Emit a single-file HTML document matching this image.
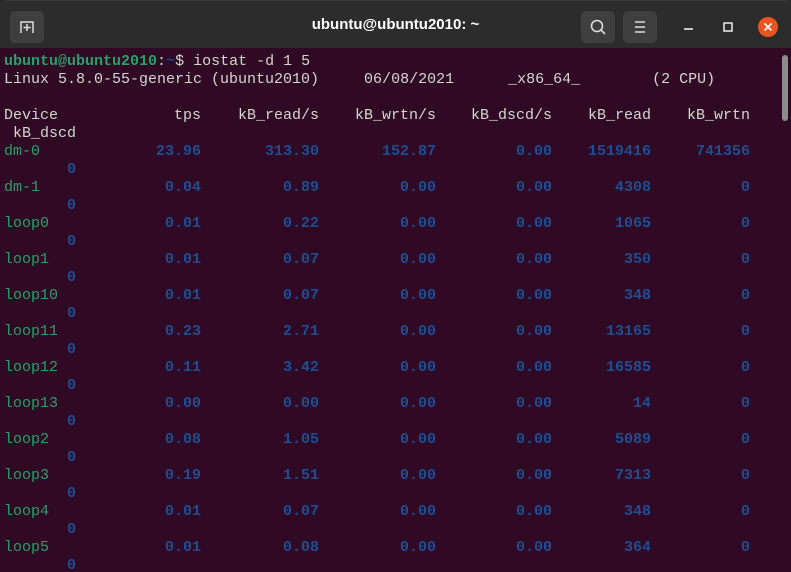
<!DOCTYPE html>
<html><head><meta charset="utf-8"><style>
*{margin:0;padding:0;box-sizing:border-box}
body{width:791px;height:572px;overflow:hidden;background:#2a2a2a;font-family:"Liberation Mono",monospace}
#tb{position:absolute;left:0;top:0;width:791px;height:48px;background:#2c2c2c;border-radius:8px 8px 0 0;border-top:1px solid #3a3a3a}
.btn{position:absolute;top:10px;width:34px;height:32px;background:#3f3f3f;border-radius:5px}
#title{position:absolute;left:0;width:791px;top:15px;text-align:center;color:#fff;font:bold 15px "Liberation Sans",sans-serif}
#term{position:absolute;left:0;top:48px;width:791px;height:524px;background:#300a24;overflow:hidden}
#in{position:absolute;left:0;top:2px;width:791px;height:524px}
.l{position:absolute;left:4px;height:18px;line-height:18px;font-size:15px;white-space:pre;color:#d3d7cf}
.row{position:absolute;left:0;width:791px;height:18px;line-height:18px;font-size:15px;white-space:pre}
.row span{position:absolute;width:140px;text-align:right;color:#1d4e94;font-weight:bold}
.row .n{left:4px;text-align:left;color:#26a269;font-weight:normal}
.h span{color:#d3d7cf;font-weight:normal}
.a{left:61px}.b{left:179px}.c{left:296px}.d{left:412px}.e{left:511px}.f{left:610px}
.z{position:absolute;left:67px;color:#1d4e94;font-size:15px;line-height:18px;height:18px;font-weight:bold}
#sb{position:absolute;left:782px;top:7px;width:6px;height:66px;background:#8d8d8d;border-radius:3px}
</style></head><body>
<div id="tb">
<div class="btn" style="left:10px"><svg width="34" height="32"><path d="M11 22 V11 H23 V22" fill="none" stroke="#ddd" stroke-width="1.5"/><path d="M17 13v7M13.5 16.5h7" stroke="#ddd" stroke-width="1.5"/></svg></div>
<div id="title">ubuntu@ubuntu2010: ~</div>
<div class="btn" style="left:581px"><svg width="34" height="32"><circle cx="16" cy="15" r="5.5" fill="none" stroke="#ddd" stroke-width="1.6"/><path d="M20 19l4 4" stroke="#ddd" stroke-width="1.6"/></svg></div>
<div class="btn" style="left:623px"><svg width="34" height="32"><path d="M12 11h10M12 16h10M12 21h10" stroke="#ddd" stroke-width="1.5"/></svg></div>
<svg style="position:absolute;left:680px;top:16px" width="100" height="22"><path d="M4 12h9" stroke="#eee" stroke-width="1.6"/><rect x="44" y="6" width="8" height="8" fill="none" stroke="#eee" stroke-width="1.5"/><circle cx="88" cy="10" r="10" fill="#e95420"/><path d="M84.5 6.5l7 7M91.5 6.5l-7 7" stroke="#fff" stroke-width="1.6"/></svg>
</div>
<div id="term">
<div id="sb"></div>
<div id="in">
<div class="l" style="top:3px"><b style="color:#26a269">ubuntu@ubuntu2010</b>:<b style="color:#12488b">~</b>$ iostat -d 1 5</div>
<div class="l" style="top:21px">Linux 5.8.0-55-generic (ubuntu2010)     06/08/2021      _x86_64_        (2 CPU)</div>
<div class="row h" style="top:57px"><span class="n" style="color:#d3d7cf">Device</span><span class="a">tps</span><span class="b">kB_read/s</span><span class="c">kB_wrtn/s</span><span class="d">kB_dscd/s</span><span class="e">kB_read</span><span class="f">kB_wrtn</span></div>
<div class="l" style="top:75px"> kB_dscd</div>

<div class="row" style="top:93px"><span class="n">dm-0</span><span class="a">23.96</span><span class="b">313.30</span><span class="c">152.87</span><span class="d">0.00</span><span class="e">1519416</span><span class="f">741356</span></div><div class="z" style="top:111px">0</div>
<div class="row" style="top:129px"><span class="n">dm-1</span><span class="a">0.04</span><span class="b">0.89</span><span class="c">0.00</span><span class="d">0.00</span><span class="e">4308</span><span class="f">0</span></div><div class="z" style="top:147px">0</div>
<div class="row" style="top:165px"><span class="n">loop0</span><span class="a">0.01</span><span class="b">0.22</span><span class="c">0.00</span><span class="d">0.00</span><span class="e">1065</span><span class="f">0</span></div><div class="z" style="top:183px">0</div>
<div class="row" style="top:201px"><span class="n">loop1</span><span class="a">0.01</span><span class="b">0.07</span><span class="c">0.00</span><span class="d">0.00</span><span class="e">350</span><span class="f">0</span></div><div class="z" style="top:219px">0</div>
<div class="row" style="top:237px"><span class="n">loop10</span><span class="a">0.01</span><span class="b">0.07</span><span class="c">0.00</span><span class="d">0.00</span><span class="e">348</span><span class="f">0</span></div><div class="z" style="top:255px">0</div>
<div class="row" style="top:273px"><span class="n">loop11</span><span class="a">0.23</span><span class="b">2.71</span><span class="c">0.00</span><span class="d">0.00</span><span class="e">13165</span><span class="f">0</span></div><div class="z" style="top:291px">0</div>
<div class="row" style="top:309px"><span class="n">loop12</span><span class="a">0.11</span><span class="b">3.42</span><span class="c">0.00</span><span class="d">0.00</span><span class="e">16585</span><span class="f">0</span></div><div class="z" style="top:327px">0</div>
<div class="row" style="top:345px"><span class="n">loop13</span><span class="a">0.00</span><span class="b">0.00</span><span class="c">0.00</span><span class="d">0.00</span><span class="e">14</span><span class="f">0</span></div><div class="z" style="top:363px">0</div>
<div class="row" style="top:381px"><span class="n">loop2</span><span class="a">0.08</span><span class="b">1.05</span><span class="c">0.00</span><span class="d">0.00</span><span class="e">5089</span><span class="f">0</span></div><div class="z" style="top:399px">0</div>
<div class="row" style="top:417px"><span class="n">loop3</span><span class="a">0.19</span><span class="b">1.51</span><span class="c">0.00</span><span class="d">0.00</span><span class="e">7313</span><span class="f">0</span></div><div class="z" style="top:435px">0</div>
<div class="row" style="top:453px"><span class="n">loop4</span><span class="a">0.01</span><span class="b">0.07</span><span class="c">0.00</span><span class="d">0.00</span><span class="e">348</span><span class="f">0</span></div><div class="z" style="top:471px">0</div>
<div class="row" style="top:489px"><span class="n">loop5</span><span class="a">0.01</span><span class="b">0.08</span><span class="c">0.00</span><span class="d">0.00</span><span class="e">364</span><span class="f">0</span></div><div class="z" style="top:507px">0</div>
</div>
</div>
</body></html>
